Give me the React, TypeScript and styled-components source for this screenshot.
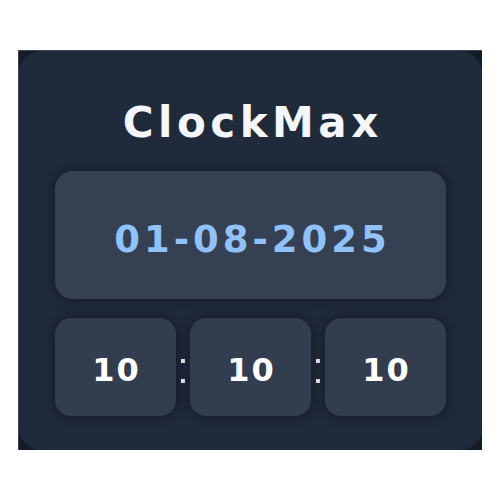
import React from 'react';
import styled, { createGlobalStyle } from 'styled-components';

const GlobalStyle = createGlobalStyle`
  html, body {
    margin: 0;
    padding: 0;
    background: #ffffff;
  }
`;

const Page = styled.div`
  width: 100vw;
  height: 100vh;
  display: flex;
  align-items: center;
  justify-content: center;
`;

const Frame = styled.div`
  width: 464px;
  height: 400px;
  background: #141c28;
  border-top: 1px solid #3a4556;
  border-left: 1px solid #3a4556;
  box-sizing: border-box;
`;

const Card = styled.div`
  height: 100%;
  box-sizing: border-box;
  background: #1f2a3b;
  border-radius: 22px;
  padding: 50px 36px 34px;
  display: flex;
  flex-direction: column;
`;

const Title = styled.h1`
  margin: 0 0 26px;
  height: 44px;
  line-height: 44px;
  text-align: center;
  font-family: 'DejaVu Sans', sans-serif;
  font-weight: 700;
  font-size: 42px;
  letter-spacing: 4.5px;
  margin-right: -4.5px;
  color: #f4f6fa;
`;

const Panel = styled.div`
  background: #354053;
  border-radius: 18px;
  box-shadow: 0 0 10px 2px rgba(14, 20, 32, 0.55);
  display: flex;
  align-items: center;
  justify-content: center;
`;

const DateBox = styled(Panel)`
  height: 128px;
  padding-top: 8px;
  box-sizing: border-box;
`;

const DateText = styled.span`
  font-family: 'DejaVu Sans', sans-serif;
  font-weight: 700;
  font-size: 37px;
  letter-spacing: 4px;
  margin-right: -4px;
  color: #90c2f7;
`;

const TimeRow = styled.div`
  margin-top: 19px;
  flex: 1;
  display: flex;
  align-items: stretch;
`;

const TimeBox = styled(Panel)`
  flex: 1;
  border-radius: 16px;
  background: #323d4f;
  padding-top: 6px;
`;

const TimeText = styled.span`
  font-family: 'DejaVu Sans', sans-serif;
  font-weight: 700;
  font-size: 32px;
  letter-spacing: 2px;
  margin-right: -2px;
  color: #ffffff;
`;

const Colon = styled.span`
  width: 14px;
  display: flex;
  flex-direction: column;
  align-items: center;
  justify-content: center;
  gap: 16px;
  padding-top: 8px;

  &::before,
  &::after {
    content: '';
    width: 4px;
    height: 4px;
    background: #e8ecf2;
  }
`;

const time = ['10', '10', '10'];

const App: React.FC = () => {
  return (
    <Page>
      <GlobalStyle />
      <Frame>
        <Card>
          <Title>ClockMax</Title>
          <DateBox>
            <DateText>01-08-2025</DateText>
          </DateBox>
          <TimeRow>
            {time.map((t, i) => (
              <React.Fragment key={i}>
                {i > 0 && <Colon />}
                <TimeBox>
                  <TimeText>{t}</TimeText>
                </TimeBox>
              </React.Fragment>
            ))}
          </TimeRow>
        </Card>
      </Frame>
    </Page>
  );
};

export default App;
